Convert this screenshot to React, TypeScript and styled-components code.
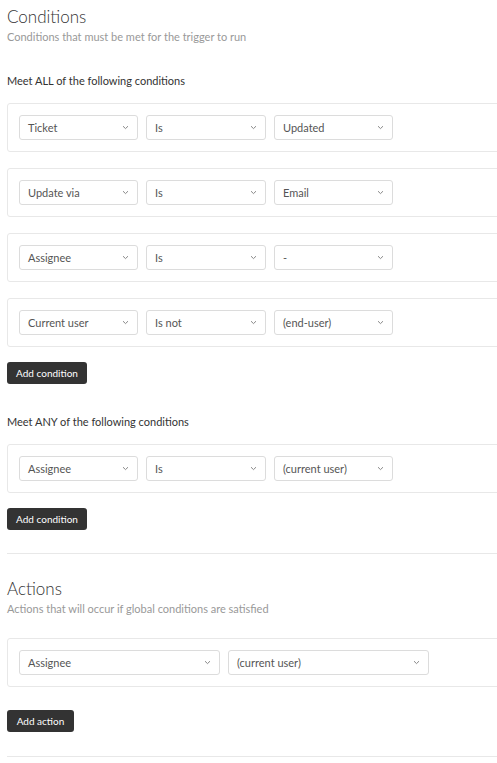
import styled, { createGlobalStyle } from "styled-components";

const GlobalStyle = createGlobalStyle`
  html, body {
    margin: 0;
    padding: 0;
    background: #fff;
    font-family: Lato, "Open Sans", sans-serif;
  }
`;

const Page = styled.div`
  width: 100%;
  overflow: hidden;
  padding: 6px 0 0 7px;
  box-sizing: border-box;
`;

const Section = styled.section`
  display: flex;
  flex-direction: column;
`;

const Title = styled.h2`
  margin: 0;
  font-size: 17px;
  font-weight: 300;
  color: #333;
  line-height: 22px;
`;

const Subtitle = styled.p`
  margin: 1px 0 0;
  font-size: 11px;
  color: #999;
  line-height: 15px;
`;

const GroupLabel = styled.h3<{ $top: number }>`
  margin: ${({ $top }) => $top}px 0 15px;
  font-size: 11px;
  font-weight: 400;
  color: #333;
  line-height: 15px;
`;

const RowList = styled.div<{ $top?: number }>`
  display: flex;
  flex-direction: column;
  gap: 16px;
  margin-top: ${({ $top = 0 }) => $top}px;
`;

const Card = styled.div`
  display: flex;
  gap: 8px;
  padding: 11px;
  border: 1px solid #e8e8e8;
  border-radius: 3px;
  width: 520px;
  box-sizing: border-box;
`;

const Select = styled.div<{ $width: number }>`
  display: flex;
  align-items: center;
  justify-content: space-between;
  width: ${({ $width }) => $width}px;
  height: 25px;
  box-sizing: border-box;
  padding: 0 8px;
  border: 1px solid #dcdcdc;
  border-radius: 3px;
  font-size: 11px;
  color: #555;
`;

const Chevron = styled.svg`
  width: 7px;
  height: 5px;
  flex: none;
`;

const Button = styled.button<{ $width: number; $top: number }>`
  align-self: flex-start;
  width: ${({ $width }) => $width}px;
  height: 22px;
  margin-top: ${({ $top }) => $top}px;
  padding: 0;
  border: none;
  border-radius: 3px;
  background: #333;
  color: #fff;
  font-family: inherit;
  font-size: 10px;
  cursor: pointer;
`;

const Divider = styled.hr<{ $top: number }>`
  margin: ${({ $top }) => $top}px 0 0;
  border: none;
  border-top: 1px solid #e8e8e8;
  width: 520px;
`;

const SectionGap = styled.div`
  height: 24px;
`;

type Row = { label: string; width: number }[];

const allRows: Row[] = [
  [
    { label: "Ticket", width: 119 },
    { label: "Is", width: 120 },
    { label: "Updated", width: 119 },
  ],
  [
    { label: "Update via", width: 119 },
    { label: "Is", width: 120 },
    { label: "Email", width: 119 },
  ],
  [
    { label: "Assignee", width: 119 },
    { label: "Is", width: 120 },
    { label: "-", width: 119 },
  ],
  [
    { label: "Current user", width: 119 },
    { label: "Is not", width: 120 },
    { label: "(end-user)", width: 119 },
  ],
];

const anyRows: Row[] = [
  [
    { label: "Assignee", width: 119 },
    { label: "Is", width: 120 },
    { label: "(current user)", width: 119 },
  ],
];

const actionRows: Row[] = [
  [
    { label: "Assignee", width: 201 },
    { label: "(current user)", width: 201 },
  ],
];

const Rows = ({ rows, top }: { rows: Row[]; top?: number }) => (
  <RowList $top={top}>
    {rows.map((row, i) => (
      <Card key={i}>
        {row.map((cell, j) => (
          <Select key={j} $width={cell.width}>
            <span>{cell.label}</span>
            <Chevron viewBox="0 0 7 5">
              <path d="M1 1.2 L3.5 3.6 L6 1.2" fill="none" stroke="#888" strokeWidth="1" />
            </Chevron>
          </Select>
        ))}
      </Card>
    ))}
  </RowList>
);

export default function App() {
  return (
    <Page>
      <GlobalStyle />
      <Section>
        <Title>Conditions</Title>
        <Subtitle>Conditions that must be met for the trigger to run</Subtitle>
        <GroupLabel $top={29}>Meet ALL of the following conditions</GroupLabel>
        <Rows rows={allRows} />
        <Button $width={80} $top={15}>Add condition</Button>
        <GroupLabel $top={30}>Meet ANY of the following conditions</GroupLabel>
        <Rows rows={anyRows} />
        <Button $width={80} $top={15}>Add condition</Button>
        <Divider $top={23} />
      </Section>
      <SectionGap />
      <Section>
        <Title>Actions</Title>
        <Subtitle>Actions that will occur if global conditions are satisfied</Subtitle>
        <Rows rows={actionRows} top={22} />
        <Button $width={67} $top={23}>Add action</Button>
        <Divider $top={24} />
      </Section>
    </Page>
  );
}
